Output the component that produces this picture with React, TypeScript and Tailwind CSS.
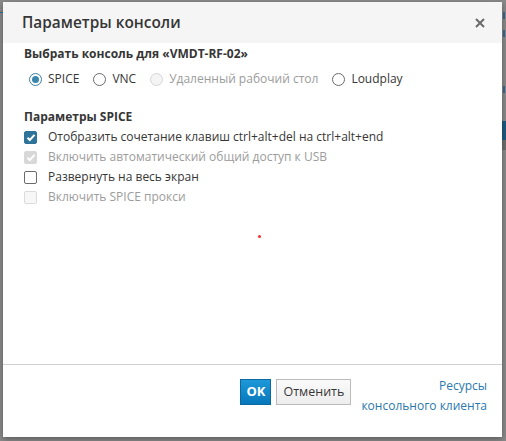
import React from "react";

const font = { fontFamily: '"Open Sans", "Noto Sans", sans-serif' };

function Radio({ checked, disabled, label }: { checked?: boolean; disabled?: boolean; label: string }) {
  return (
    <label className={`flex items-center gap-[6px] ${disabled ? "text-[#9c9c9c]" : "text-[#363636]"}`}>
      <span
        className={`w-[13px] h-[13px] rounded-full border flex items-center justify-center ${
          disabled ? "border-[#d6d6d6] bg-[#f4f4f4]" : checked ? "border-[#3a7fa3] bg-white" : "border-[#6b6b6b] bg-white"
        }`}
      >
        {checked && <span className="w-[7px] h-[7px] rounded-full bg-[#3a86ad]" />}
      </span>
      <span>{label}</span>
    </label>
  );
}

function Check({ checked, disabled, label }: { checked?: boolean; disabled?: boolean; label: string }) {
  let box = "border-[#6b6b6b] bg-white";
  if (checked && !disabled) box = "border-[#2e7399] bg-[#2e7399]";
  if (checked && disabled) box = "border-[#d8d8d8] bg-[#d8d8d8]";
  if (!checked && disabled) box = "border-[#dcdcdc] bg-[#f7f7f7]";
  return (
    <label className={`flex items-center gap-[11px] h-[20px] ${disabled ? "text-[#9c9c9c]" : "text-[#363636]"}`}>
      <span className={`w-[13px] h-[13px] rounded-[2px] border flex items-center justify-center ${box}`}>
        {checked && (
          <svg width="10" height="9" viewBox="0 0 10 9">
            <path d="M1.5 4.8 L3.8 7 L8.5 1.8" stroke="white" strokeWidth="2" fill="none" />
          </svg>
        )}
      </span>
      <span>{label}</span>
    </label>
  );
}

export default function App() {
  return (
    <div className="relative w-[506px] h-[441px] bg-[#8a8a8a] overflow-hidden" style={font}>
      {/* background table hints */}
      <div className="absolute left-0 top-[12px] w-[3px] h-[1px] bg-[#2f6f9a]" />
      <div className="absolute right-0 top-[121px] w-[4px] h-[19px] bg-[#1f5a80]" />
      <div className="absolute right-0 top-[140px] w-[4px] h-[10px] bg-[#6e6e6e]" />
      <div className="absolute right-[1px] top-[12px] w-[2px] h-[7px] bg-[#3b6790]" />
      <div className="absolute right-[1px] top-[30px] w-[2px] h-[7px] bg-[#3b6790]" />
      <div className="absolute right-[1px] top-[86px] w-[2px] h-[7px] bg-[#3b6790]" />

      {/* dialog */}
      <div className="absolute left-[3px] top-[2px] w-[499px] h-[435px] bg-white flex flex-col shadow-[0_2px_6px_rgba(0,0,0,0.35)]">
        <div className="h-[41px] bg-[#f5f5f5] flex items-center justify-between pl-[19px] pr-[17px]">
          <span className="text-[15.4px] font-semibold text-[#363636]">Параметры консоли</span>
          <svg width="10" height="10" viewBox="0 0 10 10">
            <path d="M1 1 L9 9 M9 1 L1 9" stroke="#6b6b6b" strokeWidth="2" />
          </svg>
        </div>
        <div className="flex-1 px-[21px] pt-[1px] text-[12px] relative">
          <div className="font-bold text-[#363636] leading-[20px]">Выбрать консоль для «VMDT-RF-02»</div>
          <div className="flex items-center gap-[14px] mt-[5px] ml-[5px] h-[20px]">
            <Radio checked label="SPICE" />
            <Radio label="VNC" />
            <Radio disabled label="Удаленный рабочий стол" />
            <Radio label="Loudplay" />
          </div>
          <div className="font-bold text-[#363636] leading-[20px] mt-[18px]">Параметры SPICE</div>
          <div className="flex flex-col">
            <Check checked label="Отобразить сочетание клавиш ctrl+alt+del на ctrl+alt+end" />
            <Check checked disabled label="Включить автоматический общий доступ к USB" />
            <Check label="Развернуть на весь экран" />
            <Check disabled label="Включить SPICE прокси" />
          </div>
          <div className="absolute left-[255px] top-[192px] w-[3px] h-[3px] bg-[#ff2a2a] rounded-full" />
        </div>
        <div className="h-[73px] border-t border-[#d1d1d1] flex items-start justify-end pr-[15px] pt-[14px] gap-[5px] text-[12px]">
          <button className="h-[26px] w-[31px] bg-gradient-to-b from-[#1d98d8] to-[#0678bb] border border-[#0a69a0] text-white font-bold text-[13px]">
            OK
          </button>
          <button className="h-[26px] w-[75px] bg-gradient-to-b from-[#fafafa] to-[#ededed] border border-[#bbbbbb] text-[#363636] text-[12.5px]">
            Отменить
          </button>
          <div className="flex flex-col items-end text-[#2a78ad] leading-[20px] ml-[5px] -mt-[3px]">
            <span>Ресурсы</span>
            <span>консольного клиента</span>
          </div>
        </div>
      </div>
    </div>
  );
}
